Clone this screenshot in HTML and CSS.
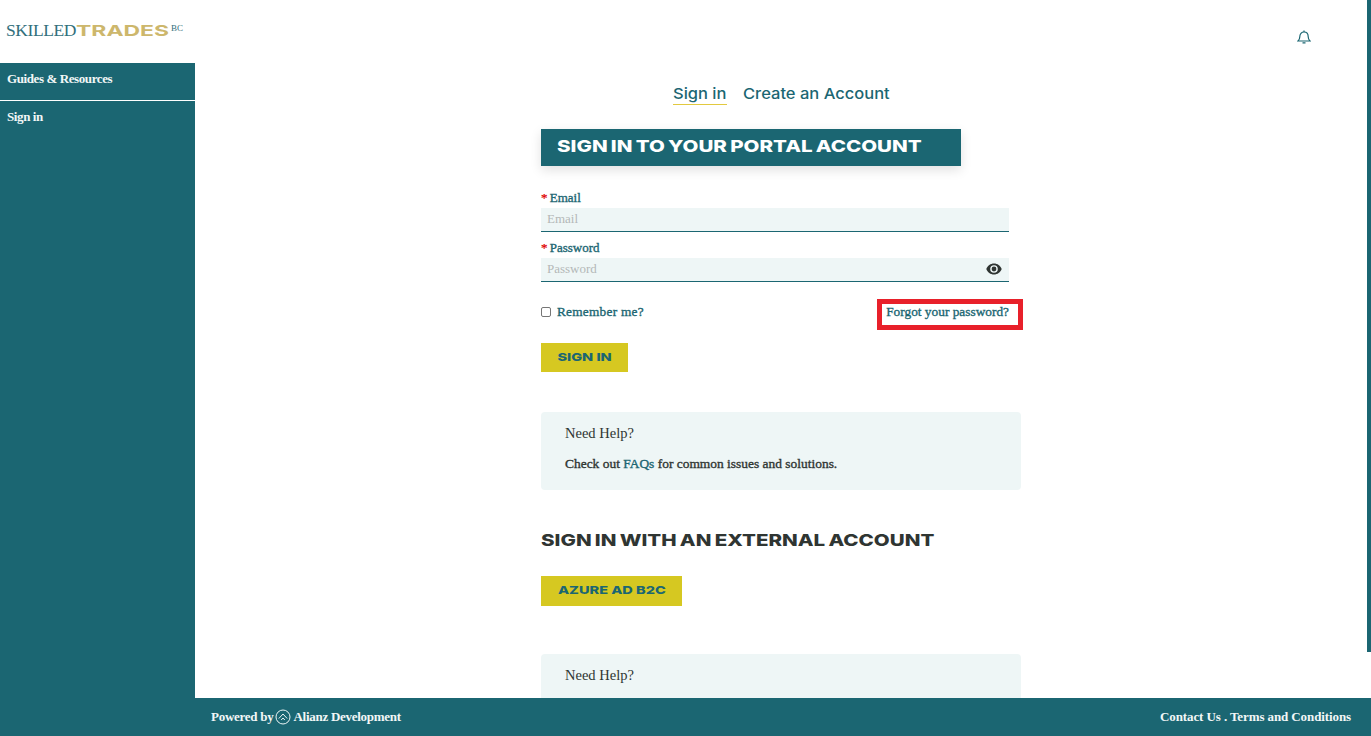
FILE: index.html
```html
<!DOCTYPE html>
<html lang="en">
<head>
<meta charset="utf-8">
<title>Sign in</title>
<link rel="stylesheet" href="styles.css">
</head>
<body>
<div class="app">
  <aside class="sidebar">
    <div class="logo"><span class="logo-a">SKILLED</span><span class="logo-b">TRADES</span><span class="logo-c">BC</span></div>
    <nav class="side-nav">
      <a class="side-link side-first">Guides &amp; Resources</a>
      <a class="side-link">Sign in</a>
    </nav>
  </aside>
  <div class="main">
    <header class="topbar">
      <svg class="bell" viewBox="0 0 14 14" width="14" height="14" fill="none" stroke="#1b6672" stroke-width="1.2"><path d="M1 11h12c-1.300-1-1.800-2-1.800-4.200C11.200 3.800 9.500 2 7 2S2.800 3.800 2.800 6.800C2.800 9 2.300 10 1 11z"/><path d="M7 .6V2M5.500 12.800h3"/></svg>
    </header>
    <div class="scroll">
      <div class="tabs">
        <a class="tab tab-active"><span class="tab-text">Sign in</span></a>
        <a class="tab tab-create"><span class="tab-text">Create an Account</span></a>
      </div>
      <div class="col">
        <h1 class="banner"><span class="wide">SIGN IN TO YOUR PORTAL ACCOUNT</span></h1>
        <div class="form">
          <label class="label"><span class="req">*</span> Email</label>
          <div class="field"><span class="ph">Email</span></div>
          <label class="label label-2"><span class="req">*</span> Password</label>
          <div class="field">
            <span class="ph">Password</span>
            <svg class="eye" viewBox="0 0 16 12" width="16" height="12"><path fill="#2f3532" fill-rule="evenodd" d="M8 .5C4.500.5 1.600 2.700.3 6c1.300 3.300 4.200 5.500 7.700 5.500s6.400-2.200 7.700-5.500C14.400 2.700 11.500.5 8 .5zM8 9.800a3.800 3.800 0 1 1 0-7.600 3.800 3.800 0 0 1 0 7.600zm0-6.200a2.400 2.400 0 1 0 0 4.800 2.400 2.400 0 0 0 0-4.800z"/></svg>
          </div>
          <div class="opts">
            <label class="remember"><span class="check"></span>Remember me?</label>
            <a class="forgot">Forgot your password?</a>
          </div>
        </div>
        <button class="btn btn-sign"><span class="btn-text">SIGN IN</span></button>
        <div class="help">
          <p class="help-title">Need Help?</p>
          <p class="help-text">Check out <a class="faq">FAQs</a> for common issues and solutions.</p>
        </div>
        <h2 class="ext"><span class="wide">SIGN IN WITH AN EXTERNAL ACCOUNT</span></h2>
        <button class="btn btn-azure"><span class="btn-text">AZURE AD B2C</span></button>
        <div class="help help-2">
          <p class="help-title">Need Help?</p>
        </div>
      </div>
    </div>
    <footer class="footer">
      <div class="powered">
        <span>Powered by</span>
        <svg class="al" viewBox="0 0 16 16" width="16" height="16" fill="none" stroke="#eef6f6" stroke-width="1"><circle cx="8" cy="8" r="7"/><path d="M3.800 9.500 8 5l4.200 4.500M6.200 11 8 9l1.800 2"/></svg>
        <span>Alianz Development</span>
      </div>
      <div class="links">Contact Us . Terms and Conditions</div>
    </footer>
  </div>
  <div class="scrollbar"></div>
</div>
</body>
</html>
```
FILE: styles.css
```css
* { box-sizing: border-box; }
html, body { margin: 0; height: 100%; overflow: hidden; background: #fff; }
body { font-family: "Liberation Serif", serif; color: #2f3532; font-size: 13px; }
p, h1, h2 { margin: 0; }
.app { display: flex; height: 736px; position: relative; }
.sidebar { width: 195px; flex: none; display: flex; flex-direction: column; }
.logo { height: 63px; background: #fff; padding: 18px 0 0 6px; white-space: nowrap; line-height: 20px; }
.logo-a { font-size: 17.500px; color: #32707c; letter-spacing: -0.4px; }
.logo-b { display: inline-block; width: 92px; font-family: Inter, sans-serif; font-weight: 700; font-size: 15px; color: #cdb76c; transform: scaleX(1.53); transform-origin: left center; }
.logo-c { font-size: 9px; color: #32707c; vertical-align: 5px; margin-left: 3px; }
.side-nav { flex: 1; background: #1b6672; }
.side-link { display: block; height: 38px; padding: 8px 7px 0; color: #f2f7f7; font-size: 13px; font-weight: 700; line-height: 15px; letter-spacing: -0.4px; }
.side-first { border-bottom: 1px solid #fff; }
.main { flex: 1; min-width: 0; display: flex; flex-direction: column; }
.topbar { height: 63px; flex: none; display: flex; justify-content: flex-end; padding: 30px 60px 0 0; }
.bell { display: block; }
.scroll { flex: 1; min-height: 0; overflow: hidden; }
.tabs { display: flex; justify-content: center; gap: 16px; padding: 20px 0 0 0; margin-left: -4px; height: 66px; }
.tab { font-family: Inter, sans-serif; font-size: 15px; font-weight: 500; color: #1b6672; height: 22px; line-height: 21px; white-space: nowrap; }
.tab-active { width: 54px; border-bottom: 1px solid #e2c93f; }
.tab-create { width: 146px; }
.tab-text { display: inline-block; transform: scaleX(1.1); transform-origin: left center; }
.col { width: 480px; margin-left: 346px; }
.banner { width: 420px; height: 37px; background: #1b6672; color: #fff; font-size: 16.500px; line-height: 35px; padding-left: 16px; white-space: nowrap; box-shadow: 0 4px 12px rgba(0,0,0,.12); }
.wide { display: inline-block; font-family: Inter, sans-serif; font-weight: 800; word-spacing: -1px; transform: scaleX(1.245); transform-origin: left center; }
.form { width: 468px; margin-top: 24px; }
.label { display: block; height: 18px; color: #1b6672; font-size: 13px; line-height: 16px; -webkit-text-stroke: 0.35px #1b6672; }
.label-2 { margin-top: 8px; }
.req { color: #e00000; -webkit-text-stroke: 0.25px #e00000; margin-right: -1px; }
.field { height: 24px; background: #eef6f6; border-bottom: 1px solid #1b6672; display: flex; align-items: center; justify-content: space-between; padding: 0 7px 2px 6px; }
.ph { color: #b4b8b8; font-size: 13px; }
.eye { display: block; }
.opts { display: flex; justify-content: space-between; align-items: center; margin-top: 21px; height: 18px; }
.remember { display: flex; align-items: center; color: #1b6672; font-size: 13.300px; letter-spacing: 0.25px; -webkit-text-stroke: 0.35px #1b6672; }
.check { width: 10px; height: 10px; border: 1px solid #767676; border-radius: 2px; margin-right: 6px; background: #fff; }
.forgot { position: relative; color: #1b6672; font-size: 13.350px; -webkit-text-stroke: 0.35px #1b6672; }
.forgot::after { content: ""; position: absolute; left: -9px; right: -14px; top: -5px; bottom: -10px; border: 5px solid #e8202a; }
.btn { display: block; border: 0; background: #d6c821; color: #1b6672; font-family: Inter, sans-serif; font-weight: 800; font-size: 11px; padding: 0 0 2px; text-align: center; }
.btn-text { display: inline-block; transform: scaleX(1.32); }
.btn-sign { width: 87px; height: 29px; margin-top: 22px; }
.help { background: #eef6f6; border-radius: 4px; width: 480px; height: 78px; padding: 12px 24px; margin-top: 40px; }
.help-title { font-size: 14.500px; line-height: 18px; }
.help-text { font-size: 13.450px; margin-top: 14px; line-height: 16px; -webkit-text-stroke: 0.35px #2f3532; }
.faq { color: #1b6672; -webkit-text-stroke: 0.35px #1b6672; }
.ext { font-size: 16.500px; color: #2f3532; margin-top: 40px; line-height: 20px; white-space: nowrap; }
.btn-azure { width: 141px; height: 30px; margin-top: 25px; }
.help-2 { margin-top: 48px; }
.footer { height: 38px; flex: none; background: #1b6672; color: #f2f7f7; font-weight: 700; font-size: 13px; letter-spacing: -0.27px; display: flex; justify-content: space-between; align-items: center; padding: 0 20px 0 16px; }
.powered { display: flex; align-items: center; gap: 2px; }
.al { display: block; }
.links { letter-spacing: -0.1px; }
.scrollbar { position: absolute; top: 0; right: 0; width: 4px; height: 652px; background: #1b6672; }
```
